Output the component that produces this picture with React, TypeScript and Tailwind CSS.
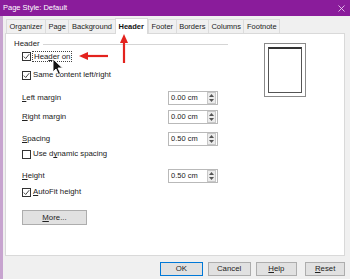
const font = { fontFamily: '"Liberation Sans", Arial, sans-serif' };

const Check = ({ checked }: { checked: boolean }) => (
  <span className="w-[9px] h-[9px] border border-[#333] bg-white flex items-center justify-center shrink-0">
    {checked && (
      <svg width="7" height="7" viewBox="0 0 7 7">
        <path d="M0.8 3.6 L2.7 5.5 L6.2 1.2" fill="none" stroke="#333" strokeWidth="0.9" />
      </svg>
    )}
  </span>
);

const Spin = ({ value }: { value: string }) => (
  <div className="w-[50px] h-[14px] border border-[#b9b9b9] bg-white flex items-center pl-[2px] pr-[1px]">
    <span className="flex-1 text-[7.5px] text-[#222]">{value}</span>
    <div className="w-[9px] h-[12px] border border-[#c8c8c8] bg-[#ececec] flex flex-col items-center justify-center gap-[2px]">
      <svg width="5" height="3" viewBox="0 0 5 3">
        <path d="M0 3 L2.5 0 L5 3 Z" fill="#555" />
      </svg>
      <svg width="5" height="3" viewBox="0 0 5 3">
        <path d="M0 0 L2.5 3 L5 0 Z" fill="#555" />
      </svg>
    </div>
  </div>
);

const Field = ({ label, value, className }: { label: React.ReactNode; value: string; className: string }) => (
  <div className={`flex items-center h-[14px] pl-[8px] ${className}`}>
    <span className="w-[146px] text-[7.8px] text-[#222]">{label}</span>
    <Spin value={value} />
  </div>
);

const CheckRow = ({ checked, label, className }: { checked: boolean; label: React.ReactNode; className: string }) => (
  <div className={`flex items-center h-[12px] pl-[8px] gap-[2px] ${className}`}>
    <Check checked={checked} />
    <span className="text-[7.8px] text-[#222]">{label}</span>
  </div>
);

const tabs = ["Organizer", "Page", "Background", "Header", "Footer", "Borders", "Columns", "Footnote"];

const Btn = ({ children, className }: { children: React.ReactNode; className: string }) => (
  <div className={`h-[14px] bg-[#e1e1e1] border flex items-center justify-center text-[7.8px] text-[#222] ${className}`}>
    {children}
  </div>
);

export default function App() {
  return (
    <div className="w-[350px] h-[279px] overflow-hidden flex flex-col relative bg-[#f0f0f0]" style={font}>
      <div className="h-[16px] bg-[#8a1c9b] flex items-center pl-[3px] pr-[5px] text-white">
        <span className="flex-1 text-[7.5px]">Page Style: Default</span>
        <svg width="7" height="7" viewBox="0 0 7 7">
          <path d="M0.5 0.5 L6.5 6.5 M6.5 0.5 L0.5 6.5" stroke="#e9c9ee" strokeWidth="0.9" />
        </svg>
      </div>
      <div className="flex-1 flex flex-col border-l-[3px] border-[#c7a4cf] pl-[2px] pr-[5px]">
        <div className="flex items-end h-[17px] pl-[1px]">
          {tabs.map((t) =>
            t === "Header" ? (
              <div
                key={t}
                className="h-[16px] -mb-px bg-white border border-b-0 border-[#d9d9d9] px-[3px] flex items-center text-[7.5px] font-bold text-[#111] relative z-10"
              >
                {t}
              </div>
            ) : (
              <div
                key={t}
                className="h-[14px] border border-b-0 border-[#dcdcdc] px-[2.5px] flex items-center text-[7.5px] text-[#222] bg-[#f0f0f0] -mr-px"
              >
                {t}
              </div>
            )
          )}
        </div>
        <div className="h-[223px] bg-white border border-[#d9d9d9] flex">
          <div className="w-[222px] pl-[8px] pt-[4px] flex flex-col">
            <div className="flex items-center h-[12px] gap-[3px]">
              <span className="text-[7.8px] text-[#222]">Header</span>
              <span className="flex-1 h-px bg-[#d5d5d5]" />
            </div>
            <div className="flex items-center h-[12px] pl-[8px] gap-[1px]">
              <Check checked />
              <span className="text-[7.8px] text-[#222] border border-dotted border-[#444] px-[1px] leading-[9px]">
                Hea<u>d</u>er on
              </span>
            </div>
            <CheckRow checked className="mt-[7px]" label="Same content left/right" />
            <Field className="mt-[10px]" label={<><u>L</u>eft margin</>} value="0.00 cm" />
            <Field className="mt-[5px]" label={<><u>R</u>ight margin</>} value="0.00 cm" />
            <Field className="mt-[8px]" label={<><u>S</u>pacing</>} value="0.50 cm" />
            <CheckRow checked={false} className="mt-[2px]" label={<>Use d<u>y</u>namic spacing</>} />
            <Field className="mt-[9px]" label={<><u>H</u>eight</>} value="0.50 cm" />
            <CheckRow checked className="mt-[3px]" label={<><u>A</u>utoFit height</>} />
            <div className="mt-[12px] ml-[8px] w-[65px] h-[15px] bg-[#e1e1e1] border border-[#adadad] flex items-center justify-center text-[7.8px] text-[#222]">
              <span><u>M</u>ore...</span>
            </div>
          </div>
          <div className="ml-[36px] mt-[9px]">
            <div className="w-[42px] h-[54px] border border-[#8a8a8a] p-[3px]">
              <div className="w-full h-full border border-[#555] border-t-[2px] border-t-[#333]" />
            </div>
          </div>
        </div>
        <div className="flex mt-[6px] pl-[155px]">
          <Btn className="w-[43px] border-[#0078d7]">OK</Btn>
          <Btn className="w-[43px] ml-[5px] border-[#adadad]">Cancel</Btn>
          <Btn className="w-[42px] ml-[5px] border-[#adadad]">
            <span><u>H</u>elp</span>
          </Btn>
          <Btn className="w-[40px] ml-[8px] border-[#adadad]">
            <span><u>R</u>eset</span>
          </Btn>
        </div>
      </div>

      {/* red annotation arrows */}
      <svg className="absolute left-[78px] top-[51px]" width="32" height="10" viewBox="0 0 32 10">
        <path d="M9 5 H30" stroke="#e3231e" strokeWidth="2.2" />
        <path d="M1 5 L10 1 L10 9 Z" fill="#e3231e" />
      </svg>
      <svg className="absolute left-[119px] top-[34px]" width="10" height="30" viewBox="0 0 10 30">
        <path d="M5 8 V29" stroke="#e3231e" strokeWidth="2.2" />
        <path d="M5 0 L9 9 L1 9 Z" fill="#e3231e" />
      </svg>
      {/* mouse cursor */}
      <svg className="absolute left-[52px] top-[58px]" width="12" height="18" viewBox="0 0 12 18">
        <path d="M1 1 L1 14 L4 11 L6.5 16.5 L8.5 15.5 L6 10 L10.5 10 Z" fill="#111" stroke="#fff" strokeWidth="0.9" />
      </svg>
    </div>
  );
}
